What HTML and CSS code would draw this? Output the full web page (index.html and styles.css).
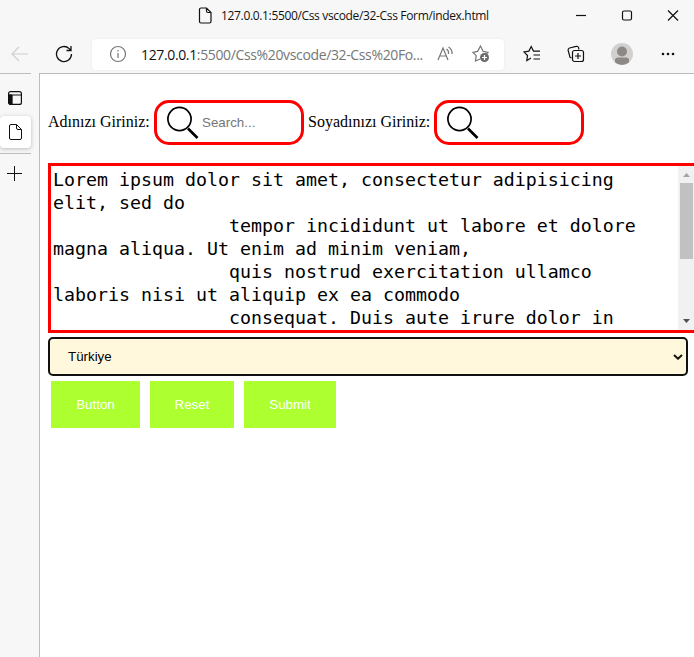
FILE: index.html
```html
<!DOCTYPE html>
<html lang="tr">
<head>
<meta charset="utf-8">
<title>127.0.0.1:5500/Css vscode/32-Css Form/index.html</title>
<link rel="stylesheet" href="styles.css">
</head>
<body>
<header class="titlebar">
  <svg class="title-file" width="14" height="17" viewBox="0 0 14 17"><path d="M3 1h5.500L13 5.500V14.500a1.500 1.500 0 0 1-1.500 1.500H3a1.500 1.500 0 0 1-1.500-1.500v-12A1.500 1.500 0 0 1 3 1zM8.500 1v3a1.500 1.500 0 0 0 1.500 1.500h3"/></svg>
  <span class="title-text">127.0.0.1:5500/Css vscode/32-Css Form/index.html</span>
  <div class="window-controls">
    <svg width="12" height="12" viewBox="0 0 12 12"><path d="M1 5.500h10"/></svg>
    <svg width="12" height="12" viewBox="0 0 12 12"><rect x="1.500" y="1" width="9" height="9" rx="1.500"/></svg>
    <svg width="12" height="12" viewBox="0 0 12 12"><path d="M1 .5l10 10M11 .5L1 10.500"/></svg>
  </div>
</header>
<nav class="toolbar">
  <svg class="back" width="18" height="16" viewBox="0 0 18 16"><path d="M17 8H1.500M8 1L1 8l7 7"/></svg>
  <svg class="reload" width="18" height="18" viewBox="0 0 18 18"><path d="M16.500 9a7.500 7.500 0 1 1-2.300-5.400L16 5.500M16 1v4.500h-4.500"/></svg>
  <div class="address">
    <svg class="info" width="18" height="18" viewBox="0 0 18 18"><circle cx="9" cy="9" r="7.500"/><path d="M9 8v5M9 5v1.500"/></svg>
    <span class="url"><b>127.0.0.1</b>:5500/Css%20vscode/32-Css%20Fo...</span>
    <svg class="read" width="18" height="16" viewBox="0 0 18 16"><path d="M1 14L6 2l5 12M2.700 10h6.600M9.500 3q2.500 1.500 2 5M11.500 1q4 2.500 3.500 7"/></svg>
    <svg class="fav" width="18" height="18" viewBox="0 0 18 18"><path d="M8 14l-4.500 2 .7-5.400L1 7.300l4.600-.9L8.500 1l2.700 5.400 4.800.9-2 2"/><circle class="solid" cx="12.500" cy="12.500" r="4.500"/><path class="plus" d="M12.500 10v5M10 12.500h5"/></svg>
  </div>
  <svg class="favs" width="18" height="18" viewBox="0 0 18 18"><path d="M8 13l-4.200 2.500.7-5L1 7l4.900-.9L8.200 1.500l2.300 4.600H17M10.500 10H17M10.500 14H17"/></svg>
  <svg class="collections" width="18" height="18" viewBox="0 0 18 18"><path d="M4.500 13L3 12.400 1.200 5.500A2 2 0 0 1 2.600 3L9 1.400a2 2 0 0 1 2.600 1.400l.4 1.700"/><rect x="5.500" y="5.500" width="11" height="11" rx="2"/><path d="M11 8v6M8 11h6"/></svg>
  <svg class="profile" width="22" height="22" viewBox="0 0 22 22"><circle cx="11" cy="11" r="11" fill="#d2d0ce"/><circle cx="11" cy="8.500" r="5" fill="#8d8986"/><path d="M4 19.300V17q0-2.500 3-2.500h8q3 0 3 2.500v2.300Q15 22 11 22t-7-2.700z" fill="#8d8986"/></svg>
  <svg class="more" width="14" height="4" viewBox="0 0 14 4"><circle cx="2" cy="2" r="1.300"/><circle cx="7" cy="2" r="1.300"/><circle cx="12" cy="2" r="1.300"/></svg>
</nav>
<div class="workspace">
  <aside class="tabs">
    <svg class="tab-menu" width="14" height="14" viewBox="0 0 14 14"><rect x=".6" y=".6" width="12.800" height="12.800" rx="2"/><path d="M1 4h12.500M4 4v9.500"/><path class="tab-menu-fill" d="M1 4h2.500v9.500H2L1 12z"/></svg>
    <div class="tab-card"><svg width="13" height="16" viewBox="0 0 13 16"><path d="M2 .5h5.500l5 5v8.500a1.500 1.500 0 0 1-1.500 1.500H2A1.500 1.500 0 0 1 .5 14V2A1.500 1.500 0 0 1 2 .5zM7.500.5V4A1.500 1.500 0 0 0 9 5.500h3.500"/></svg></div>
    <div class="tab-new"><svg width="15" height="15" viewBox="0 0 15 15"><path d="M7.500 0v15M0 7.500h15"/></svg></div>
  </aside>
  <main class="page">
    <form class="form">
      <div class="fields">
        <label class="first-label" for="first">Adınızı Giriniz:</label>
        <span class="search"><svg width="33" height="33" viewBox="0 0 33 33"><circle cx="13.500" cy="13" r="11.600"/><path d="M22 22.500L31.500 32"/></svg><input id="first" placeholder="Search..."></span>
        <label class="last-label" for="last">Soyadınızı Giriniz:</label>
        <span class="search"><svg width="33" height="33" viewBox="0 0 33 33"><circle cx="13.500" cy="13" r="11.600"/><path d="M22 22.500L31.500 32"/></svg><input id="last"></span>
      </div>
      <div class="message">
        <pre class="message-text">Lorem ipsum dolor sit amet, consectetur adipisicing
elit, sed do
                tempor incididunt ut labore et dolore
magna aliqua. Ut enim ad minim veniam,
                quis nostrud exercitation ullamco
laboris nisi ut aliquip ex ea commodo
                consequat. Duis aute irure dolor in</pre>
        <div class="scrollbar">
          <svg width="16" height="17" viewBox="0 0 16 17"><path d="M5 11l3.500-4 3.500 4z" fill="#a3a3a3"/></svg>
          <div class="thumb"></div>
          <svg width="16" height="17" viewBox="0 0 16 17"><path d="M5 6l3.500 4L12 6z" fill="#505050"/></svg>
        </div>
      </div>
      <div class="country"><span>Türkiye</span><svg width="10" height="6" viewBox="0 0 10 6"><path d="M1 1l4 3.700L9 1"/></svg></div>
      <div class="actions">
        <button class="w-button" type="button">Button</button>
        <button class="w-reset" type="reset">Reset</button>
        <button class="w-submit" type="button">Submit</button>
      </div>
    </form>
  </main>
</div>
</body>
</html>
```
FILE: styles.css
```css
* { box-sizing: border-box; }
body { margin: 0; width: 694px; height: 657px; overflow: hidden; background: #f7f7f7; display: flex; flex-direction: column; font-family: "Open Sans", sans-serif; color: #111; }
svg { display: block; flex: none; fill: none; stroke: #111; stroke-width: 1.2; }
.titlebar { height: 31px; flex: none; display: flex; align-items: center; padding-left: 198px; }
.title-file { margin-right: 9px; }
.title-text { width: 286px; font-size: 12px; letter-spacing: -0.34px; line-height: 16px; white-space: nowrap; }
.window-controls { display: flex; gap: 34px; margin-left: 68px; }
.toolbar { height: 42px; flex: none; display: flex; align-items: center; padding: 4px 0 0 11px; }
.back { stroke: #cfcfcf; }
.reload { margin-left: 26px; stroke-width: 1.3; }
.address { width: 412px; height: 31px; margin-left: 19px; flex: none; display: flex; align-items: center; background: #fff; border-radius: 4px; padding-left: 17px; box-shadow: 0 0 3px #e8e8e8; }
.address svg { stroke: #767676; }
.url { width: 296px; margin-left: 14px; font-size: 14px; letter-spacing: -0.36px; color: #767676; white-space: nowrap; }
.url b { font-weight: 400; color: #111; }
.fav { margin-left: 17px; }
.address .solid { fill: #6b6b6b; stroke: none; }
.address .plus { stroke: #fff; }
.favs { margin-left: 19px; }
.collections { margin-left: 26px; }
.profile { margin-left: 26px; stroke: none; }
.more { margin-left: 28px; fill: #111; stroke: none; }
.workspace { flex: 1; display: flex; }
.tabs { width: 39px; flex: none; }
.tabs::before { content: ""; display: block; width: 31px; height: 1px; background: #bcbcbc; }
.tab-menu { margin: 17px 0 11px 8px; }
.tab-menu-fill { fill: #111; }
.tab-card { width: 31px; height: 32px; padding: 8px 0 0 9px; background: #fff; border-radius: 4px; box-shadow: 0 1px 4px #bbb; }
.tab-card svg { stroke-width: 1; }
.tab-new { width: 31px; margin-top: 5px; padding: 12px 0 0 7px; border-top: 1px solid #bcbcbc; }
.tab-new svg { stroke-width: 1; }
.page { width: 655px; background: #fff; border-top: 1px solid #bcbcbc; border-left: 1px solid #bcbcbc; padding: 26px 0 0 8px; overflow: hidden; }
.form { display: block; }
.fields { display: flex; align-items: center; height: 45px; font: 16px "Liberation Serif", serif; color: #000; }
.fields label { white-space: nowrap; padding-bottom: 2px; }
.first-label { width: 106px; }
.last-label { width: 126px; margin-left: 4px; }
.search { width: 150px; height: 45px; border: 3px solid red; border-radius: 15px; display: flex; align-items: center; padding-left: 9px; }
.search svg { stroke: #000; stroke-width: 1.7; }
.search path { stroke-width: 2.6; }
.search input { width: 90px; height: 30px; margin-left: 3px; padding: 0; border: 0; outline: 0; background: transparent; font: 13.333px "Liberation Sans", sans-serif; }
.search input::placeholder { color: #757575; }
.message { display: flex; justify-content: space-between; width: 646px; height: 170px; margin-top: 18px; border: 3px solid red; border-right: 0; }
.message-text { margin: 0; padding: 2px; height: 164px; overflow: hidden; font: 18.27px/23px "DejaVu Sans Mono", monospace; color: #000; }
.scrollbar { width: 16px; flex: none; display: flex; flex-direction: column; background: #f1f1f1; }
.scrollbar svg { stroke: none; }
.thumb { width: 13px; height: 76px; margin: 0 0 54px 2px; background: #c1c1c1; }
.country { width: 640px; height: 39px; margin-top: 4px; padding: 0 3px 0 18px; border: 2px solid #111; border-radius: 5px; background: #fff8dc; display: flex; align-items: center; justify-content: space-between; font: 13.333px "Liberation Sans", sans-serif; color: #000; }
.country svg { stroke-width: 2; }
.actions { display: flex; gap: 10px; padding: 5px 0 0 3px; }
.actions button { height: 47px; padding: 0; border: 0; background: #adff2f; color: #fff; font: 13.333px "Liberation Sans", sans-serif; }
.w-button { width: 89px; }
.w-reset { width: 84px; }
.w-submit { width: 92px; }
```
